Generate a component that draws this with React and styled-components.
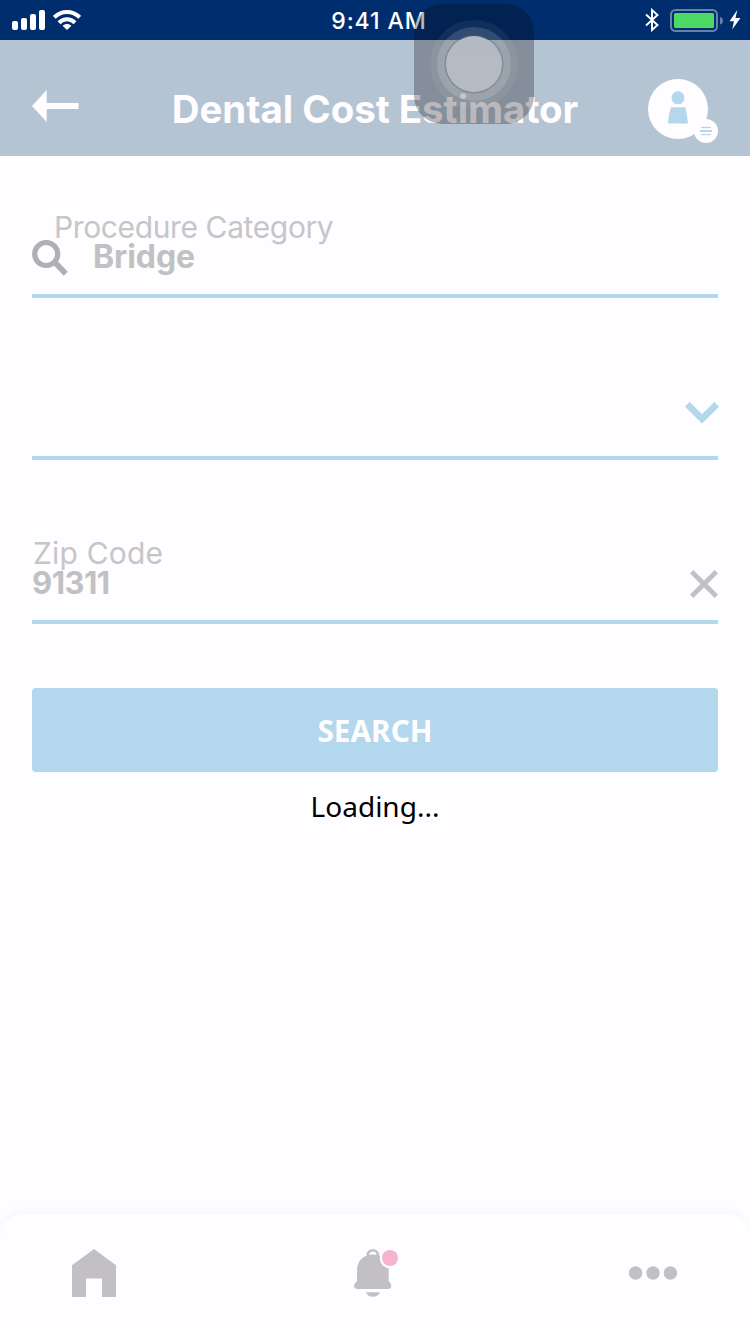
import React from "react";
import styled, { createGlobalStyle } from "styled-components";

const Global = createGlobalStyle`
  * { box-sizing: border-box; }
  body { margin: 0; background: #fefdff; }
  button { border: 0; padding: 0; background: none; font: inherit; }
  svg { display: block; flex: none; }
`;

const sky = "#b3d7ed";
const gray = "#c2c0c3";

const Screen = styled.div`
  position: relative;
  display: flex;
  flex-direction: column;
  width: 750px;
  height: 1334px;
  overflow: hidden;
  background: #fefdff;
  font-family: Inter, "Liberation Sans", sans-serif;
`;

const StatusBar = styled.div`
  display: grid;
  grid-template-columns: 1fr auto 1fr;
  align-items: center;
  height: 40px;
  padding: 0 9px 0 12px;
  background: #002d6e;
  color: #fff;
`;

const StatusGroup = styled.div`
  display: flex;
  align-items: center;
  justify-content: ${(p) => (p.$end ? "flex-end" : "flex-start")};
  gap: ${(p) => (p.$end ? 11 : 8)}px;
`;

const Time = styled.span`
  font-size: 23px;
  font-weight: 500;
  line-height: 38px;
  letter-spacing: 0.95px;
  padding: 2px 0 0 5px;
`;

const Header = styled.header`
  display: flex;
  align-items: flex-start;
  justify-content: space-between;
  height: 116px;
  padding: 39px 32px 0;
  background: #b4c4d3;
`;

const BackButton = styled.button`
  width: 84px;
  padding-top: 11px;
`;

const Title = styled.h1`
  margin: 10px 0 0;
  color: #fffdff;
  font-size: 38.5px;
  font-weight: 700;
  line-height: 40px;
  letter-spacing: -0.06px;
  white-space: nowrap;
`;

const ProfileButton = styled.button`
  display: flex;
  justify-content: flex-end;
  width: 84px;
`;

const Form = styled.main`
  display: flex;
  flex-direction: column;
  padding: 0 32px;
`;

const Field = styled.div`
  display: flex;
  flex-direction: column;
  height: ${(p) => p.$height}px;
  padding-top: ${(p) => p.$top}px;
  border-bottom: 4px solid ${sky};
`;

const Label = styled.label`
  height: 30px;
  padding-left: ${(p) => p.$indent}px;
  color: #c7c5c8;
  font-size: 30px;
  font-weight: 400;
  line-height: 30px;
  letter-spacing: ${(p) => p.$spacing}px;
  white-space: nowrap;
`;

const FieldRow = styled.div`
  display: flex;
  align-items: center;
  justify-content: ${(p) => (p.$spread ? "space-between" : "flex-start")};
  gap: 25px;
  height: 32px;
  margin-right: ${(p) => (p.$bleed ? -1 : 0)}px;
`;

const Value = styled.span`
  padding-bottom: 2px;
  color: ${gray};
  font-size: ${(p) => p.$size}px;
  font-weight: 700;
  line-height: 32px;
  letter-spacing: ${(p) => p.$spacing}px;
`;

const SearchButton = styled.button`
  height: 84px;
  margin-top: 64px;
  border-radius: 4px;
  background: ${sky};
  color: #fffdff;
  font-family: "Noto Sans", sans-serif;
  font-size: 29.8px;
  font-weight: 700;
  line-height: 40px;
  padding-top: 2px;
`;

const Loading = styled.p`
  margin: 14px 0 0;
  color: #000;
  font-family: "Noto Sans", sans-serif;
  font-size: 28px;
  line-height: 40px;
  text-align: center;
`;

const TabBar = styled.nav`
  display: flex;
  align-items: flex-start;
  justify-content: space-between;
  height: 120px;
  margin-top: auto;
  padding: 34px 72px 0;
  border-radius: 24px 24px 0 0;
  background: #fefdff;
  box-shadow: 0 -4px 8px rgba(60, 50, 70, 0.035);
`;

const Tab = styled.button`
  display: flex;
  justify-content: ${(p) => p.$align || "center"};
  width: 50px;
  height: 50px;
`;

const BellTab = styled(Tab)`
  padding-left: 4px;
`;

const AssistiveTouch = styled.div`
  position: absolute;
  top: 4px;
  left: 414px;
  display: grid;
  place-items: center;
  width: 120px;
  height: 120px;
  border-radius: 28px;
  background: rgba(8, 8, 10, 0.28);
`;

const Ring = styled.div`
  display: grid;
  place-items: center;
  width: ${(p) => p.$size}px;
  height: ${(p) => p.$size}px;
  border-radius: 50%;
  background: rgba(255, 255, 255, ${(p) => p.$alpha});
`;

const Knob = styled.div`
  width: 56px;
  height: 56px;
  border-radius: 50%;
  background: linear-gradient(#b3bac4, #b7bbc2);
  box-shadow: 0 0 0 1.5px rgba(80, 95, 110, 0.35);
`;

const SignalIcon = () => (
  <svg width="33" height="20" viewBox="0 0 33 20" fill="#fff">
    <rect x="0" y="11" width="6" height="9" rx="2" />
    <rect x="9" y="8" width="6" height="12" rx="2" />
    <rect x="18" y="4" width="6" height="16" rx="2" />
    <rect x="27" y="0" width="6" height="20" rx="2" />
  </svg>
);

const WifiIcon = () => (
  <svg width="28" height="20" viewBox="0 0 28 20" fill="none" stroke="#fff" strokeWidth="4">
    <path d="M1.3 7.4C8.5 0.3 19.5 0.3 26.7 7.4" />
    <path d="M6 12.7C10.8 8 17.2 8 22 12.7" />
    <path d="M9.6 15.7C12.2 13.3 15.8 13.3 18.4 15.7L14 20Z" fill="#fff" stroke="none" />
  </svg>
);

const BluetoothIcon = () => (
  <svg width="14" height="24" viewBox="0 0 14 24" fill="none" stroke="#fff" strokeWidth="1.9">
    <path d="M1 6.5L12.5 17L7 22V2L12.5 7L1 17.5" />
  </svg>
);

const BatteryIcon = () => (
  <svg width="54" height="24" viewBox="0 0 54 24">
    <rect x="1" y="2" width="46" height="21" rx="4.5" fill="none" stroke="#6682aa" strokeWidth="2" />
    <rect x="4" y="5" width="40" height="15" rx="1.5" fill="#4cd964" />
    <path d="M50 9C54 10 54 15.5 50 16.5Z" fill="#6682aa" />
  </svg>
);

const BoltIcon = () => (
  <svg width="12" height="20" viewBox="0 0 12 20" fill="#fff">
    <path d="M8.3 0L0.5 11.2H5L3.2 19.5L11.5 8H6.5Z" />
  </svg>
);

const PowerGroup = styled.div`
  display: flex;
  align-items: center;
  gap: 5px;
`;

const BackIcon = () => (
  <svg width="47" height="32" viewBox="0 0 47 32" fill="#fffdff">
    <path d="M0 16L14.7 0V13H46.5V19H14.7V32Z" />
  </svg>
);

const ProfileIcon = () => (
  <svg width="70" height="64" viewBox="0 0 70 64">
    <circle cx="30" cy="30" r="30" fill="#fffdff" />
    <circle cx="30" cy="18.8" r="6.5" fill={sky} />
    <path d="M23 28.3H37.2Q39.2 35 40 44.5H20Q20.6 35 23 28.3Z" fill={sky} />
    <circle cx="58" cy="52" r="12" fill="#fffdff" />
    <path d="M53 48.5H63" stroke="#c9cdd1" strokeWidth="1.3" />
    <path d="M52 52H64" stroke={sky} strokeWidth="2" />
    <path d="M53 55.5H63" stroke={sky} strokeWidth="1.3" />
  </svg>
);

const SearchIcon = () => (
  <svg width="36" height="36" viewBox="0 0 36 36" fill="none" stroke="#b1afb2" strokeWidth="5.2">
    <circle cx="14.2" cy="14" r="11.5" />
    <path d="M22 21.5L33.8 33.7" strokeWidth="5.8" />
  </svg>
);

const ChevronIcon = () => (
  <svg width="34" height="22" viewBox="0 0 34 22" fill="none" stroke={sky} strokeWidth="6.6">
    <path d="M2.3 2.3L17 16.8L31.7 2.3" />
  </svg>
);

const ClearIcon = () => (
  <svg width="28" height="28" viewBox="0 0 28 28" fill="none" stroke={gray} strokeWidth="4.8">
    <path d="M1.7 1.7L26.3 26.3M26.3 1.7L1.7 26.3" />
  </svg>
);

const HomeIcon = () => (
  <svg width="44" height="50" viewBox="0 0 44 50" fill={gray}>
    <path d="M0 17.2L22 1L44 17.2V49H30V30.5H14V49H0Z" />
  </svg>
);

const BellIcon = () => (
  <svg width="46" height="50" viewBox="0 0 46 50">
    <path d="M13.8 9V7C13.8 0.6 23.8 0.6 23.8 7V9" fill="none" stroke={gray} strokeWidth="2.6" />
    <path
      d="M3 22C3 12 10.5 6.4 18.8 6.4C27.5 6.4 34.7 12 34.7 22V33L36.4 35.2C38.2 38 37 41 34.4 41H3.3C0.3 41 -0.9 38 0.9 35.2L3 33Z"
      fill={gray}
    />
    <path d="M11.8 44.2H26C23.8 50.3 14 50.3 11.8 44.2Z" fill={gray} />
    <circle cx="36" cy="10" r="10.3" fill="#fefdff" />
    <circle cx="36" cy="10" r="8" fill="#f4b4cf" />
  </svg>
);

const MoreIcon = () => (
  <svg width="50" height="50" viewBox="0 0 50 50" fill={gray}>
    <circle cx="7.6" cy="25" r="6.7" />
    <circle cx="25" cy="25" r="6.7" />
    <circle cx="42.4" cy="25" r="6.7" />
  </svg>
);

export default function App() {
  return (
    <>
      <Global />
      <Screen>
        <StatusBar>
          <StatusGroup>
            <SignalIcon />
            <WifiIcon />
          </StatusGroup>
          <Time>9:41 AM</Time>
          <StatusGroup $end>
            <BluetoothIcon />
            <PowerGroup>
              <BatteryIcon />
              <BoltIcon />
            </PowerGroup>
          </StatusGroup>
        </StatusBar>
        <Header>
          <BackButton aria-label="Back">
            <BackIcon />
          </BackButton>
          <Title>Dental Cost Estimator</Title>
          <ProfileButton aria-label="Profile">
            <ProfileIcon />
          </ProfileButton>
        </Header>
        <Form>
          <Field $height={142} $top={56}>
            <Label $indent={22} $spacing={-0.38}>Procedure Category</Label>
            <FieldRow>
              <SearchIcon />
              <Value $size={32} $spacing={-0.1}>Bridge</Value>
            </FieldRow>
          </Field>
          <Field $height={162} $top={99}>
            <FieldRow $spread $bleed>
              <span />
              <ChevronIcon />
            </FieldRow>
          </Field>
          <Field $height={164} $top={78}>
            <Label $indent={1} $spacing={0.2}>Zip Code</Label>
            <FieldRow $spread>
              <Value $size={31} $spacing={-0.5}>91311</Value>
              <ClearIcon />
            </FieldRow>
          </Field>
          <SearchButton>SEARCH</SearchButton>
          <Loading>Loading...</Loading>
        </Form>
        <TabBar>
          <Tab aria-label="Home" $align="flex-start">
            <HomeIcon />
          </Tab>
          <BellTab aria-label="Notifications">
            <BellIcon />
          </BellTab>
          <Tab aria-label="More" $align="flex-end">
            <MoreIcon />
          </Tab>
        </TabBar>
        <AssistiveTouch>
          <Ring $size={88} $alpha={0.06}>
            <Ring $size={74} $alpha={0.14}>
              <Knob />
            </Ring>
          </Ring>
        </AssistiveTouch>
      </Screen>
    </>
  );
}
